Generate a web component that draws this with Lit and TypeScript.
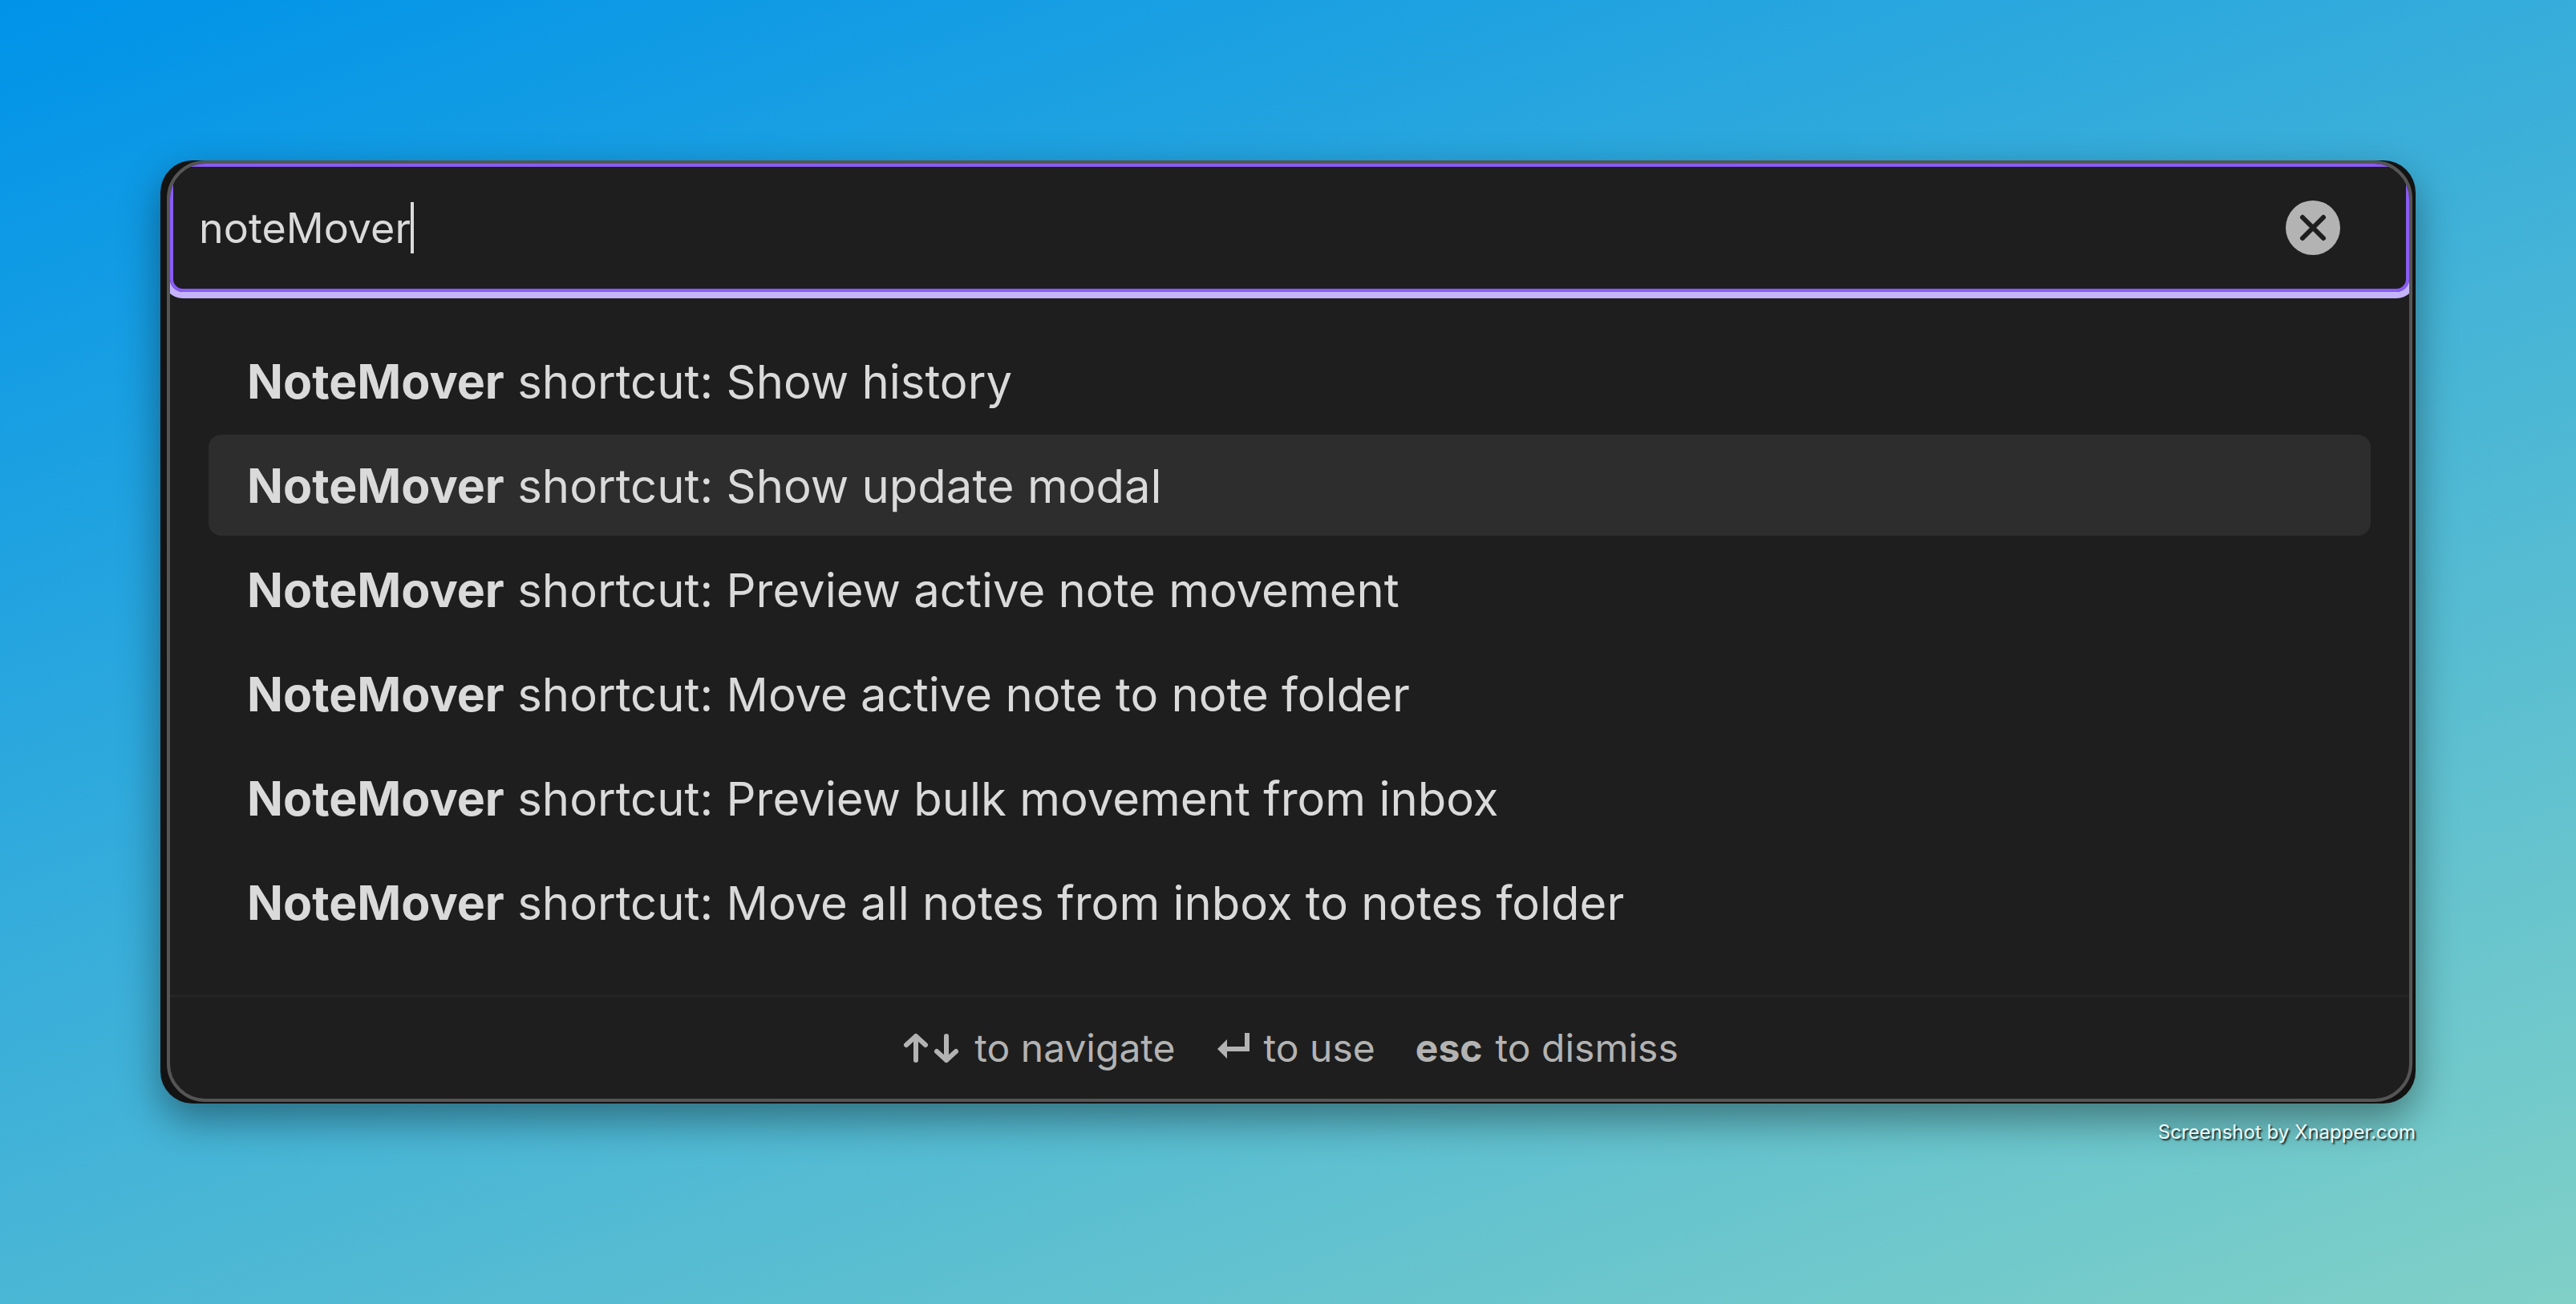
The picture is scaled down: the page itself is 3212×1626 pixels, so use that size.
import { LitElement, html, css } from "lit";
import { customElement, state } from "lit/decorators.js";

interface Command {
  prefix: string;
  rest: string;
}

const COMMANDS: Command[] = [
  "Show history",
  "Show update modal",
  "Preview active note movement",
  "Move active note to note folder",
  "Preview bulk movement from inbox",
  "Move all notes from inbox to notes folder",
].map((name) => ({ prefix: "NoteMover", rest: ` shortcut: ${name}` }));

@customElement("app-root")
export class AppRoot extends LitElement {
  @state() private query = "noteMover";
  @state() private selected = 1;

  static styles = css`
    :host {
      display: block;
      font-family: Inter, "Liberation Sans", sans-serif;
      font-weight: 400;
      color: #dadada;
    }
    * {
      box-sizing: border-box;
    }
    .backdrop {
      min-height: 100vh;
      padding: 200px;
      background: linear-gradient(160deg, #0093e9 0%, #80d0c7 100%);
    }
    .frame {
      padding: 0 4px 2px 8px;
      border-radius: 40px;
      background: #131313;
      box-shadow: 0 20px 50px rgba(0, 0, 0, 0.4);
    }
    .modal {
      overflow: hidden;
      border: 4px solid #555555;
      border-radius: 48px;
      background: #1e1e1e;
    }
    .search {
      display: flex;
      align-items: center;
      height: 160px;
      padding: 0 82px 0 32px;
      border: 4px solid #8a5cf5;
      border-radius: 16px;
      box-shadow: 0 0 0 8px #c5b3fb;
    }
    .query {
      field-sizing: content;
      min-width: 0;
      padding: 2px 0 0;
      border: 0;
      outline: 0;
      background: none;
      color: inherit;
      font: 400 52px/72px Inter, "Liberation Sans", sans-serif;
      caret-color: transparent;
    }
    .caret {
      width: 4px;
      height: 64px;
      background: #dadada;
    }
    .clear {
      display: block;
      width: 68px;
      height: 68px;
      margin-left: auto;
      padding: 0;
      border: 0;
      background: none;
    }
    .clear svg {
      display: block;
    }
    .results {
      display: flex;
      flex-direction: column;
      gap: 4px;
      margin: 0;
      padding: 48px 48px 52px;
      list-style: none;
    }
    .item {
      display: block;
      width: 100%;
      padding: 25px 48px 23px;
      border: 0;
      border-radius: 16px;
      background: none;
      color: inherit;
      font: 400 58px/78px Inter, "Liberation Sans", sans-serif;
      text-align: left;
    }
    .item.selected {
      background: #2d2d2d;
    }
    .item b {
      font-size: 59px;
      font-weight: 700;
    }
    .hints {
      display: flex;
      justify-content: center;
      gap: 50px;
      padding: 32px;
      border-top: 4px solid #242424;
      color: #b3b3b3;
      font-size: 48px;
      line-height: 62px;
    }
    .hint {
      display: flex;
      align-items: center;
      gap: 16px;
    }
    .hint kbd {
      display: flex;
      font: inherit;
      font-weight: 700;
    }
    .credit {
      margin: 24px 0 0;
      color: #eef8f8;
      font-size: 24px;
      line-height: 24px;
      text-align: right;
      text-shadow: 2px 2px 2px rgba(0, 0, 0, 0.8);
    }
  `;

  private onInput(event: Event) {
    this.query = (event.target as HTMLInputElement).value;
  }

  render() {
    return html`
      <main class="backdrop">
        <div class="frame">
          <section class="modal" aria-label="Command palette">
            <div class="search">
              <input class="query" type="text" aria-label="Select a command" .value=${this.query} @input=${this.onInput} />
              <span class="caret"></span>
              <button class="clear" type="button" aria-label="Clear" @click=${() => (this.query = "")}>
                <svg width="68" height="68" viewBox="0 0 68 68" aria-hidden="true">
                  <circle cx="34" cy="34" r="34" fill="#b3b3b3" />
                  <path d="M21 21 47 47M47 21 21 47" fill="none" stroke="#1e1e1e" stroke-width="6" stroke-linecap="round" />
                </svg>
              </button>
            </div>
            <ul class="results">
              ${COMMANDS.map(
                (command, index) => html`<li>
                  <button
                    class="item ${index === this.selected ? "selected" : ""}"
                    type="button"
                    @mouseenter=${() => (this.selected = index)}
                  ><b>${command.prefix}</b>${command.rest}</button>
                </li>`
              )}
            </ul>
            <footer class="hints">
              <div class="hint">
                <kbd aria-label="Up and down">
                  <svg width="76" height="40" viewBox="0 0 76 40" fill="none" stroke="currentColor" stroke-width="6" stroke-linecap="round" stroke-linejoin="round" aria-hidden="true">
                    <path d="M19 35V5M7 16 19 5 31 16M57 5V35M45 24 57 35 69 24" />
                  </svg>
                </kbd>
                <span>to navigate</span>
              </div>
              <div class="hint">
                <kbd aria-label="Enter">
                  <svg width="44" height="40" viewBox="0 0 44 40" aria-hidden="true">
                    <path d="M39 1V21H13" fill="none" stroke="currentColor" stroke-width="6" />
                    <path d="M2 21 14 9V33Z" fill="currentColor" />
                  </svg>
                </kbd>
                <span>to use</span>
              </div>
              <div class="hint"><kbd>esc</kbd><span>to dismiss</span></div>
            </footer>
          </section>
        </div>
        <p class="credit">Screenshot by Xnapper.com</p>
      </main>
    `;
  }
}
